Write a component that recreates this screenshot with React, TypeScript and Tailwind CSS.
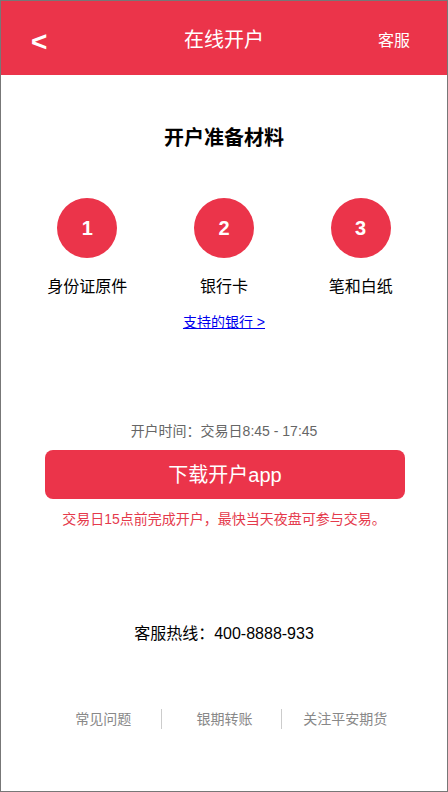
const materials = [
  { n: '1', label: '身份证原件' },
  { n: '2', label: '银行卡' },
  { n: '3', label: '笔和白纸' },
]

const footerLinks = ['常见问题', '银期转账', '关注平安期货']

export default function App() {
  return (
    <div
      className="flex h-[792px] w-[448px] flex-col border border-[#777] bg-white"
      style={{ fontFamily: '"Liberation Sans", "Noto Sans CJK SC", sans-serif' }}
    >
      {/* Header */}
      <header className="grid h-[74px] shrink-0 grid-cols-[1fr_auto_1fr] items-center bg-[#eb344a] px-[30px] pt-[3px] text-white">
        <span className="mt-[5px] text-[28px] font-bold leading-none">&lt;</span>
        <h1 className="text-[20px] leading-7">在线开户</h1>
        <span className="mt-[2px] justify-self-end pr-[7px] text-[16px]">客服</span>
      </header>

      {/* Materials */}
      <h2 className="mt-[49px] text-center text-[20px] font-bold leading-7 text-black">开户准备材料</h2>
      <div className="mt-[46px] grid grid-cols-3 px-[18px]">
        {materials.map((m) => (
          <div className="flex flex-col items-center" key={m.n}>
            <div className="flex h-[60px] w-[60px] items-center justify-center rounded-full bg-[#eb344a] text-[20px] font-bold text-white">
              {m.n}
            </div>
            <p className="mt-[18px] text-[16px] leading-[22px] text-black">{m.label}</p>
          </div>
        ))}
      </div>
      <a className="mt-[15px] self-center text-[14px] leading-[18px] text-[#0000ee] underline" href="#">
        支持的银行 &gt;
      </a>

      {/* Download */}
      <p className="mt-[90px] text-center text-[14px] leading-5 text-[#666]">开户时间：交易日8:45 - 17:45</p>
      <button className="ml-[44px] mr-[42px] mt-[9px] h-[49px] rounded-[8px] bg-[#eb344a] text-[20px] text-white">
        下载开户app
      </button>
      <p className="mt-[11px] text-center text-[14px] leading-[18px] text-[#e53a4c]">
        交易日15点前完成开户，最快当天夜盘可参与交易。
      </p>

      <p className="mt-[95px] text-center text-[16px] leading-[22px] text-black">客服热线：400-8888-933</p>

      {/* Footer links */}
      <div className="mt-[64px] grid grid-cols-3 pl-[39px] pr-[45px]">
        {footerLinks.map((t, i) => (
          <div
            className={`pl-[6px] text-center text-[14px] leading-5 text-[#888] ${i > 0 ? 'border-l border-[#ccc]' : ''}`}
            key={t}
          >
            {t}
          </div>
        ))}
      </div>
    </div>
  )
}
